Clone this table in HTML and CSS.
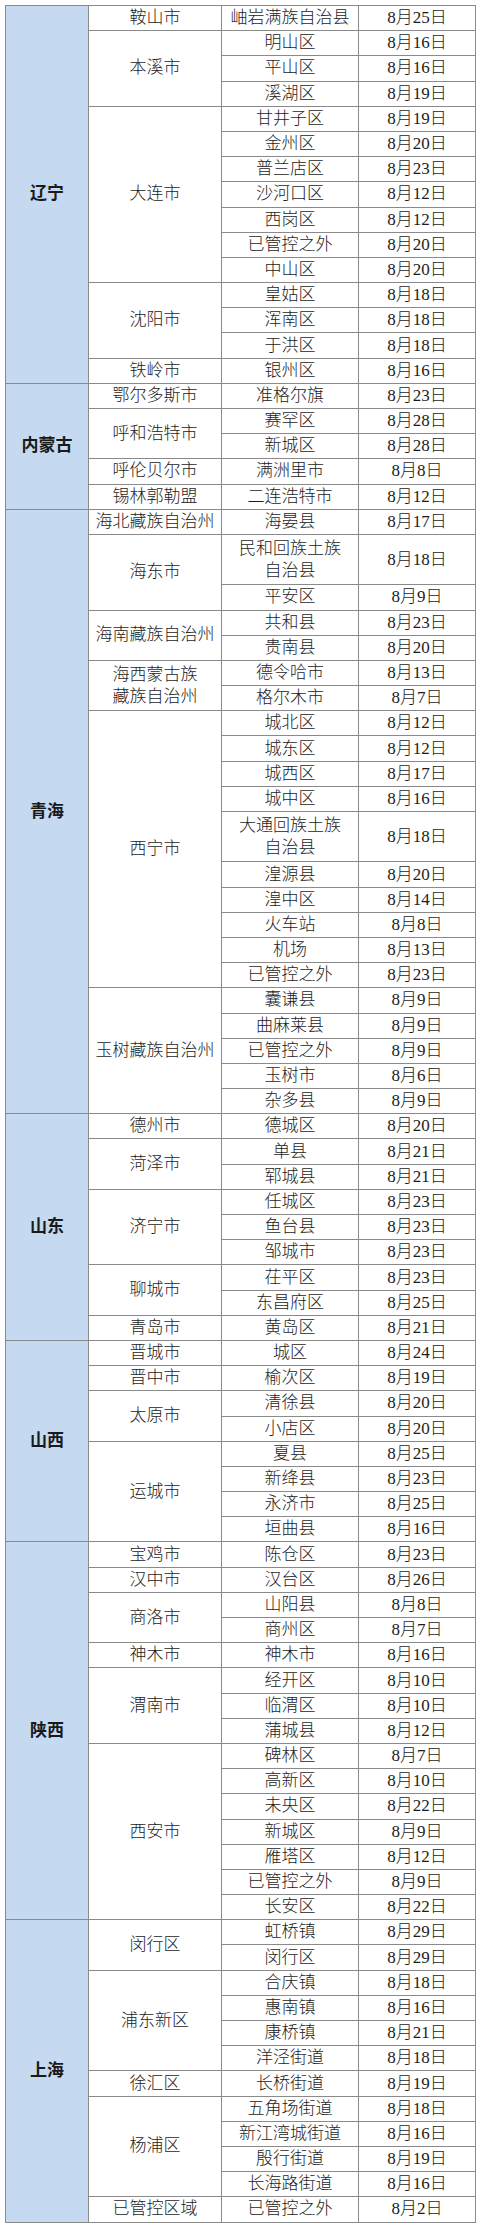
FILE: index.html
```html
<!DOCTYPE html>
<html lang="zh-CN">
<head>
<meta charset="utf-8">
<title>表</title>
<link rel="stylesheet" href="styles.css">
</head>
<body>
<table class="sheet">
<colgroup><col class="c1"><col class="c2"><col class="c3"><col class="c4"></colgroup>
<tbody>
<tr><td class="prov" rowspan="15">辽宁</td><td>鞍山市</td><td>岫岩满族自治县</td><td>8月25日</td></tr>
<tr><td rowspan="3">本溪市</td><td>明山区</td><td>8月16日</td></tr>
<tr><td>平山区</td><td>8月16日</td></tr>
<tr><td>溪湖区</td><td>8月19日</td></tr>
<tr><td rowspan="7">大连市</td><td>甘井子区</td><td>8月19日</td></tr>
<tr><td>金州区</td><td>8月20日</td></tr>
<tr><td>普兰店区</td><td>8月23日</td></tr>
<tr><td>沙河口区</td><td>8月12日</td></tr>
<tr><td>西岗区</td><td>8月12日</td></tr>
<tr><td>已管控之外</td><td>8月20日</td></tr>
<tr><td>中山区</td><td>8月20日</td></tr>
<tr><td rowspan="3">沈阳市</td><td>皇姑区</td><td>8月18日</td></tr>
<tr><td>浑南区</td><td>8月18日</td></tr>
<tr><td>于洪区</td><td>8月18日</td></tr>
<tr><td>铁岭市</td><td>银州区</td><td>8月16日</td></tr>

<tr><td class="prov" rowspan="5">内蒙古</td><td>鄂尔多斯市</td><td>准格尔旗</td><td>8月23日</td></tr>
<tr><td rowspan="2">呼和浩特市</td><td>赛罕区</td><td>8月28日</td></tr>
<tr><td>新城区</td><td>8月28日</td></tr>
<tr><td>呼伦贝尔市</td><td>满洲里市</td><td>8月8日</td></tr>
<tr><td>锡林郭勒盟</td><td>二连浩特市</td><td>8月12日</td></tr>

<tr><td class="prov" rowspan="22">青海</td><td>海北藏族自治州</td><td>海晏县</td><td>8月17日</td></tr>
<tr class="tall"><td rowspan="2">海东市</td><td>民和回族土族<br>自治县</td><td>8月18日</td></tr>
<tr><td>平安区</td><td>8月9日</td></tr>
<tr><td rowspan="2">海南藏族自治州</td><td>共和县</td><td>8月23日</td></tr>
<tr><td>贵南县</td><td>8月20日</td></tr>
<tr><td rowspan="2">海西蒙古族<br>藏族自治州</td><td>德令哈市</td><td>8月13日</td></tr>
<tr><td>格尔木市</td><td>8月7日</td></tr>
<tr><td rowspan="10">西宁市</td><td>城北区</td><td>8月12日</td></tr>
<tr><td>城东区</td><td>8月12日</td></tr>
<tr><td>城西区</td><td>8月17日</td></tr>
<tr><td>城中区</td><td>8月16日</td></tr>
<tr class="tall"><td>大通回族土族<br>自治县</td><td>8月18日</td></tr>
<tr><td>湟源县</td><td>8月20日</td></tr>
<tr><td>湟中区</td><td>8月14日</td></tr>
<tr><td>火车站</td><td>8月8日</td></tr>
<tr><td>机场</td><td>8月13日</td></tr>
<tr><td>已管控之外</td><td>8月23日</td></tr>
<tr><td rowspan="5">玉树藏族自治州</td><td>囊谦县</td><td>8月9日</td></tr>
<tr><td>曲麻莱县</td><td>8月9日</td></tr>
<tr><td>已管控之外</td><td>8月9日</td></tr>
<tr><td>玉树市</td><td>8月6日</td></tr>
<tr><td>杂多县</td><td>8月9日</td></tr>

<tr><td class="prov" rowspan="9">山东</td><td>德州市</td><td>德城区</td><td>8月20日</td></tr>
<tr><td rowspan="2">菏泽市</td><td>单县</td><td>8月21日</td></tr>
<tr><td>郓城县</td><td>8月21日</td></tr>
<tr><td rowspan="3">济宁市</td><td>任城区</td><td>8月23日</td></tr>
<tr><td>鱼台县</td><td>8月23日</td></tr>
<tr><td>邹城市</td><td>8月23日</td></tr>
<tr><td rowspan="2">聊城市</td><td>茌平区</td><td>8月23日</td></tr>
<tr><td>东昌府区</td><td>8月25日</td></tr>
<tr><td>青岛市</td><td>黄岛区</td><td>8月21日</td></tr>

<tr><td class="prov" rowspan="8">山西</td><td>晋城市</td><td>城区</td><td>8月24日</td></tr>
<tr><td>晋中市</td><td>榆次区</td><td>8月19日</td></tr>
<tr><td rowspan="2">太原市</td><td>清徐县</td><td>8月20日</td></tr>
<tr><td>小店区</td><td>8月20日</td></tr>
<tr><td rowspan="4">运城市</td><td>夏县</td><td>8月25日</td></tr>
<tr><td>新绛县</td><td>8月23日</td></tr>
<tr><td>永济市</td><td>8月25日</td></tr>
<tr><td>垣曲县</td><td>8月16日</td></tr>

<tr><td class="prov" rowspan="15">陕西</td><td>宝鸡市</td><td>陈仓区</td><td>8月23日</td></tr>
<tr><td>汉中市</td><td>汉台区</td><td>8月26日</td></tr>
<tr><td rowspan="2">商洛市</td><td>山阳县</td><td>8月8日</td></tr>
<tr><td>商州区</td><td>8月7日</td></tr>
<tr><td>神木市</td><td>神木市</td><td>8月16日</td></tr>
<tr><td rowspan="3">渭南市</td><td>经开区</td><td>8月10日</td></tr>
<tr><td>临渭区</td><td>8月10日</td></tr>
<tr><td>蒲城县</td><td>8月12日</td></tr>
<tr><td rowspan="7">西安市</td><td>碑林区</td><td>8月7日</td></tr>
<tr><td>高新区</td><td>8月10日</td></tr>
<tr><td>未央区</td><td>8月22日</td></tr>
<tr><td>新城区</td><td>8月9日</td></tr>
<tr><td>雁塔区</td><td>8月12日</td></tr>
<tr><td>已管控之外</td><td>8月9日</td></tr>
<tr><td>长安区</td><td>8月22日</td></tr>

<tr><td class="prov" rowspan="12">上海</td><td rowspan="2">闵行区</td><td>虹桥镇</td><td>8月29日</td></tr>
<tr><td>闵行区</td><td>8月29日</td></tr>
<tr><td rowspan="4">浦东新区</td><td>合庆镇</td><td>8月18日</td></tr>
<tr><td>惠南镇</td><td>8月16日</td></tr>
<tr><td>康桥镇</td><td>8月21日</td></tr>
<tr><td>洋泾街道</td><td>8月18日</td></tr>
<tr><td>徐汇区</td><td>长桥街道</td><td>8月19日</td></tr>
<tr><td rowspan="4">杨浦区</td><td>五角场街道</td><td>8月18日</td></tr>
<tr><td>新江湾城街道</td><td>8月16日</td></tr>
<tr><td>殷行街道</td><td>8月19日</td></tr>
<tr><td>长海路街道</td><td>8月16日</td></tr>
<tr><td>已管控区域</td><td>已管控之外</td><td>8月2日</td></tr>
</tbody>
</table>
</body>
</html>
```
FILE: styles.css
```css
html, body {
  margin: 0;
  padding: 0;
  background: #ffffff;
}
body {
  padding: 5px;
  font-family: "Liberation Serif", "Noto Sans CJK SC", serif;
  font-weight: 300;
  color: #1c1c1c;
}
.sheet {
  width: 470px;
  table-layout: fixed;
  border-collapse: collapse;
  border: 1px solid #8a8a8a;
}
.c1 { width: 83px; }
.c2 { width: 133px; }
.c3 { width: 137px; }
.c4 { width: 117px; }
.sheet tr {
  height: 25.2px;
}
.sheet tr.tall {
  height: 50.4px;
}
.sheet td {
  border: 1px solid #8a8a8a;
  padding: 0;
  text-align: center;
  vertical-align: middle;
  font-size: 17px;
  line-height: 22px;
  white-space: nowrap;
  overflow: hidden;
}
.sheet td.prov {
  background: #c5d9f1;
  font-weight: 700;
  color: #1a1a1a;
}
```
